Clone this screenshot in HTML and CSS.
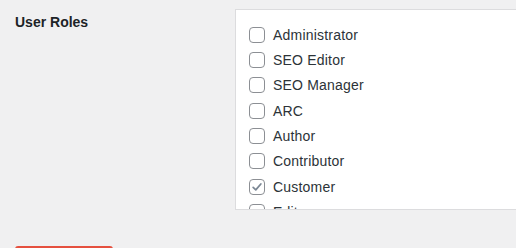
FILE: index.html
```
<!DOCTYPE html>
<html lang="en">
<head>
    <meta charset="UTF-8">
    <meta name="viewport" content="width=device-width, initial-scale=1.0">
    <title>User Roles</title>
    <link rel="stylesheet" href="styles.css">
</head>
<body>
    <div class="form-row">
        <div class="field-label">User Roles</div>
        <div class="roles-box">
            <ul class="roles">
                <li><span class="cb"></span>Administrator</li>
                <li><span class="cb"></span>SEO Editor</li>
                <li><span class="cb"></span>SEO Manager</li>
                <li><span class="cb"></span>ARC</li>
                <li><span class="cb"></span>Author</li>
                <li><span class="cb"></span>Contributor</li>
                <li><span class="cb checked"><svg viewBox="0 0 16 16"><path d="M3.6 8.4 L6.6 11.2 L12.4 4.6" fill="none" stroke="#7b8794" stroke-width="2" stroke-linecap="round" stroke-linejoin="round"/></svg></span>Customer</li>
                <li><span class="cb"></span>Editor</li>
            </ul>
        </div>
    </div>
    <div class="actions">
        <button class="btn-danger" aria-label="Delete"></button>
    </div>
</body>
</html>
```

FILE: styles.css
```
body {
    background-color: #f0f0f1;
    color: #1d2327;
    font-family: "Liberation Sans", Arial, sans-serif;
    font-size: 14px;
    margin: 0;
    height: 100vh;
    overflow: hidden;
}
.form-row {
    display: flex;
    align-items: flex-start;
    padding-top: 9px;
}
.field-label {
    width: 235px;
    padding: 3px 0 0 15px;
    box-sizing: border-box;
    font-weight: bold;
    line-height: 20px;
    flex-shrink: 0;
}
.roles-box {
    flex: 1;
    height: 201px;
    box-sizing: border-box;
    background: #fff;
    border: 1px solid #dcdcde;
    border-right: none;
    overflow: hidden;
}
.roles {
    list-style: none;
    margin: 0;
    padding: 12px 0 0 13px;
}
.roles li {
    display: flex;
    align-items: center;
    height: 25.35px;
    color: #2c3338;
    letter-spacing: 0.2px;
}
.cb {
    width: 16px;
    height: 16px;
    box-sizing: border-box;
    border: 1px solid #8c8f94;
    border-radius: 4px;
    background: #fff;
    margin-right: 8px;
    display: flex;
    flex-shrink: 0;
}
.cb svg {
    width: 14px;
    height: 14px;
}
.actions {
    padding: 36px 0 0 15px;
}
.btn-danger {
    display: block;
    width: 98px;
    height: 32px;
    background: #e5503f;
    border: none;
    border-radius: 3px;
}
```
